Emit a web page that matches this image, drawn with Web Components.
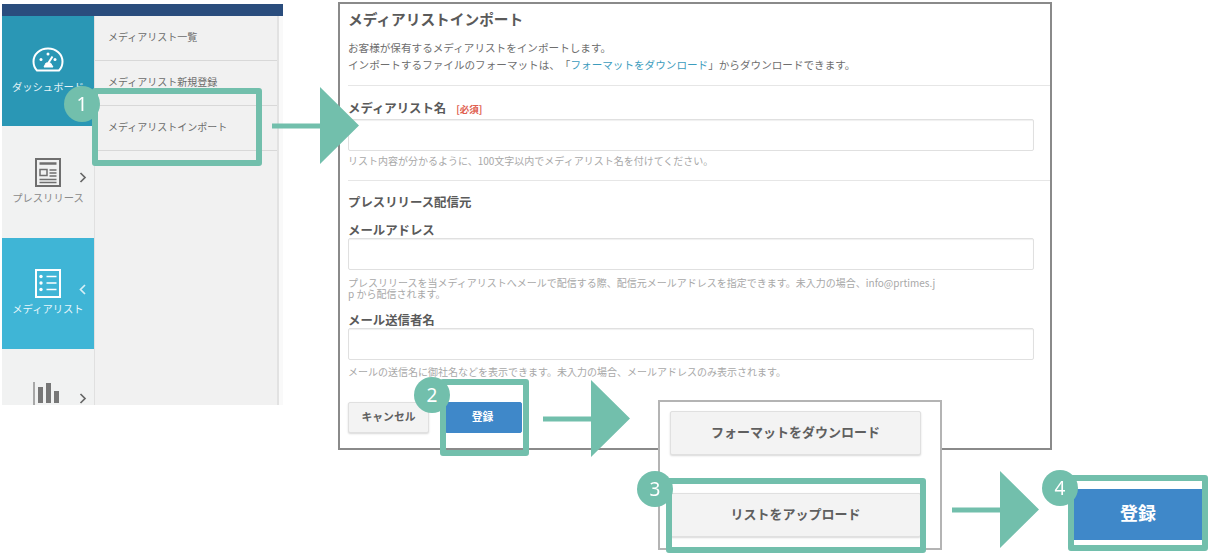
<!DOCTYPE html>
<html lang="ja"><head><meta charset="utf-8"><title>メディアリストインポート</title>
<style>
html,body{margin:0;padding:0;background:#fff}
body{font-family:"Noto Sans CJK JP","Noto Sans",sans-serif;color:#666;text-spacing-trim:space-all}
</style></head><body>
<guide-canvas>
  <side-nav style="left:2px;top:4px">
    <nav-item slot="nav" tone="dark" label="ダッシュボード" icon="gauge"></nav-item>
    <nav-item slot="nav" label="プレスリリース" icon="news" chevron="right"></nav-item>
    <nav-item slot="nav" tone="light" label="メディアリスト" icon="list" chevron="left"></nav-item>
    <nav-item slot="nav" label="" icon="chart" chevron="right"></nav-item>
    <sub-item>メディアリスト一覧</sub-item>
    <sub-item>メディアリスト新規登録</sub-item>
    <sub-item>メディアリストインポート</sub-item>
  </side-nav>
  <import-form style="left:338px;top:2px"></import-form>
  <download-panel style="left:658px;top:400px"></download-panel>
  <big-submit style="left:1074px;top:481px"></big-submit>

  <step-frame style="left:92px;top:88px;width:170px;height:78px"></step-frame>
  <step-frame style="left:440px;top:379px;width:89px;height:77px"></step-frame>
  <step-frame style="left:666px;top:478px;width:260px;height:75px"></step-frame>
  <step-frame style="left:1068px;top:475px;width:140px;height:76px"></step-frame>

  <step-badge style="left:64px;top:86px">1</step-badge>
  <step-badge style="left:414px;top:377px">2</step-badge>
  <step-badge style="left:637px;top:471px">3</step-badge>
  <step-badge style="left:1042px;top:470px">4</step-badge>

  <flow-arrow style="left:272px;top:87px"></flow-arrow>
  <flow-arrow style="left:543px;top:380px"></flow-arrow>
  <flow-arrow style="left:952px;top:471px"></flow-arrow>
</guide-canvas>

<script>
const mk=(name,html)=>{customElements.define(name,class extends HTMLElement{
  constructor(){super();this.attachShadow({mode:'open'}).innerHTML=html;}
});};

mk('guide-canvas',`<style>:host{display:block;position:relative;width:1212px;height:559px;overflow:hidden;filter:blur(.45px)}</style><slot></slot>`);

const icons={
 gauge:`<svg width="32" height="25" viewBox="0 0 32 25" fill="none" stroke="#fff" stroke-width="2"><path d="M5 23.500C3 21.500 1.500 18 1.500 14.500C1.500 7 8 1.500 16 1.500S30.500 7 30.500 14.500C30.500 18 29 21.500 27 23.500Z" stroke-linejoin="round"/><circle cx="9" cy="12.500" r="1.500" fill="#fff" stroke="none"/><circle cx="16" cy="7" r="1.500" fill="#fff" stroke="none"/><circle cx="23" cy="12.500" r="1.500" fill="#fff" stroke="none"/><path d="M20.500 9.500L16 16.500" stroke-width="2"/><path d="M12 20L14 16H18.500L21 20Z" fill="#fff" stroke="#fff" stroke-width="1"/></svg>`,
 news:`<svg width="26" height="29" viewBox="0 0 26 29" fill="none" stroke="#6f6f6f"><rect x="1" y="1" width="24" height="27" stroke-width="2"/><path d="M4.500 5.500H21.500" stroke-width="2.500"/><path d="M5 11.500H12V17.500H5Z" stroke-width="1.500"/><path d="M14.500 12H21.500M14.500 15H21.500M14.500 18H21.500M4.500 21.500H21.500M4.500 24.500H21.500" stroke-width="1.400"/></svg>`,
 list:`<svg width="26" height="29" viewBox="0 0 26 29" fill="none" stroke="#fff"><rect x="1" y="1" width="24" height="27" stroke-width="2"/><path d="M11.500 7.500H21.500M11.500 14H21.500M11.500 20.500H21.500" stroke-width="1.500"/><circle cx="6" cy="7.500" r="1.700" fill="#fff" stroke="none"/><circle cx="6" cy="14" r="1.700" fill="#fff" stroke="none"/><circle cx="6" cy="20.500" r="1.700" fill="#fff" stroke="none"/></svg>`,
 chart:`<svg width="31" height="26" viewBox="0 0 31 26" fill="none"><path d="M1 1V24.500H30" stroke="#777" stroke-width="1.200"/><rect x="5" y="6" width="5" height="16" fill="#777"/><rect x="13" y="2" width="5" height="20" fill="#777"/><rect x="21" y="10" width="5" height="12" fill="#777"/></svg>`
};

customElements.define('nav-item',class extends HTMLElement{
  constructor(){super();this.attachShadow({mode:'open'});}
  connectedCallback(){
    const icon=icons[this.getAttribute('icon')]||'',label=this.getAttribute('label')||'',ch=this.getAttribute('chevron');
    const d=ch==='left'?'M6 1L1.500 5.500L6 10':'M1.500 1L6 5.500L1.500 10';
    this.shadowRoot.innerHTML=`<style>
      :host{display:flex;flex-direction:column;align-items:center;position:relative;box-sizing:border-box;height:112px;padding-top:32px;background:#f1f2f2;color:#8a8a8a;font-size:10.3px;line-height:14px}
      :host([tone=dark]){background:#2a97b5;color:#e4f3f7;height:110px;padding-top:31px}
      :host([tone=light]){background:#3fb5d6;color:#e9f7fb;height:111px;padding-top:31px}
      :host([icon=chart]){height:56px;padding-top:32px;overflow:hidden}
      .ic{display:flex;flex:none}
      span{margin-top:4px;white-space:nowrap}
      :host([tone=dark]) span{margin-top:8px}
      .ch{position:absolute;right:7px;top:46px}
      :host([icon=chart]) .ch{top:44px}
    </style><div class="ic">${icon}</div>${label?`<span>${label}</span>`:''}${ch?`<svg class="ch" width="8" height="11" viewBox="0 0 8 11" fill="none" stroke="${ch==='left'?'#d7eff6':'#666'}" stroke-width="1.700"><path d="${d}"/></svg>`:''}`;
  }
});

mk('sub-item',`<style>:host{display:flex;align-items:center;box-sizing:border-box;height:45px;padding:0 0 4px 13px;font-size:10px;color:#6c6c6c;border-bottom:1px solid #d8d8d8;white-space:nowrap}</style><slot></slot>`);

mk('side-nav',`<style>
 :host{display:block;position:absolute;width:281px;height:401px;overflow:hidden}
 .top{height:12px;background:#2a4d7d}
 .body{display:flex;height:389px}
 .l{width:92px;flex:none;border-right:1px solid #e0e0e0;display:flex;flex-direction:column;background:#f1f2f2}
 .s{width:182px;flex:none;background:#f1f1f1;border-right:2px solid #e2e2e2}
 .edge{flex:1;background:#f9f9f9}
</style><div class="top"></div><div class="body"><div class="l"><slot name="nav"></slot></div><div class="s"><slot></slot></div><div class="edge"></div></div>`);

mk('form-field',`<style>
 :host{display:block;padding-right:16px}
 .lab{font-size:12.4px;font-weight:700;line-height:16px;color:#5a5a5a;display:block;white-space:nowrap}
 .box{display:block;box-sizing:border-box;height:32px;margin-top:var(--box-gap,0px);border:1px solid #e0e0e0;border-radius:2px;background:#fff;box-shadow:inset 0 1px 1px #f0f0f0}
 .help{font-size:10px;line-height:11px;color:#a8a8a8;margin-top:var(--help-gap,4px);white-space:nowrap}
</style><span class="lab"><slot name="label"></slot></span><div class="box"></div><div class="help"><slot></slot></div>`);

mk('ui-button',`<style>
 :host{display:flex;align-items:center;justify-content:center;box-sizing:border-box;border:1px solid #e0e0e0;border-radius:2px;background:#f3f3f3;color:#5f5f5f;font-weight:700;font-size:10.8px;box-shadow:0 1px 2px #d8d8d8;white-space:nowrap;padding-bottom:3px}
 :host([primary]){background:#3f88c9;border-color:#3f88c9;color:#fff;box-shadow:none;padding-right:2px}
</style><slot></slot>`);

mk('import-form',`<style>
 :host{display:block;position:absolute;box-sizing:border-box;width:714px;height:448px;border:2px solid #8a8a8a;background:#fff;padding-left:8px;color:#6e6e6e}
 h1{margin:0;padding-top:5px;font-size:14.7px;line-height:20px;font-weight:700;color:#5a5a5a}
 p{margin:10px 0 0;font-size:10.6px;line-height:17px;color:#6e6e6e}
 a{color:#3c9cbd}
 hr{border:0;border-top:1px solid #e6e6e6;margin:0}
 .req{color:#e0604f;font-size:9.5px;margin-left:10px}
 h2{margin:13px 0 0;font-size:12.4px;line-height:16px;color:#5a5a5a}
 .actions{display:flex;gap:16px;margin-top:25px}
</style>
<h1>メディアリストインポート</h1>
<p>お客様が保有するメディアリストをインポートします。<br>インポートするファイルのフォーマットは、「<a>フォーマットをダウンロード</a>」からダウンロードできます。</p>
<hr style="margin-top:12px">
<form-field style="margin-top:14px;--box-gap:2px"><span slot="label">メディアリスト名<span class="req">[必須]</span></span>リスト内容が分かるように、100文字以内でメディアリスト名を付けてください。</form-field>
<hr style="margin-top:14px">
<h2>プレスリリース配信元</h2>
<form-field style="margin-top:12px;--help-gap:7px"><span slot="label">メールアドレス</span>プレスリリースを当メディアリストへメールで配信する際、配信元メールアドレスを指定できます。未入力の場合、info@prtimes.j<br>p から配信されます。</form-field>
<form-field style="margin-top:13px;--help-gap:6px"><span slot="label">メール送信者名</span>メールの送信名に御社名などを表示できます。未入力の場合、メールアドレスのみ表示されます。</form-field>
<div class="actions"><ui-button style="width:81px;height:31px">キャンセル</ui-button><ui-button primary style="width:77px;height:31px">登録</ui-button></div>`);

mk('download-panel',`<style>
 :host{display:flex;flex-direction:column;gap:38px;position:absolute;box-sizing:border-box;width:284px;height:150px;border:2px solid #b4b4b4;background:#fff;padding:9px 0 0 10px}
 ui-button{width:251px;height:44px;font-size:13px}
</style><ui-button>フォーマットをダウンロード</ui-button><ui-button>リストをアップロード</ui-button>`);

mk('big-submit',`<style>
 :host{display:flex;flex-direction:column;position:absolute;width:128px;height:64px;background:#fff;padding-top:8px;box-sizing:border-box}
 div{height:51px;background:#3f88c9;color:#fff;font-size:18px;font-weight:700;display:flex;align-items:center;justify-content:center;padding-bottom:5px;box-sizing:border-box}
</style><div>登録</div>`);

mk('step-frame',`<style>:host{display:block;position:absolute;box-sizing:border-box;border:6px solid #72bfac;border-radius:3px}</style>`);
mk('step-badge',`<style>:host{display:flex;align-items:center;justify-content:center;position:absolute;width:36px;height:36px;border-radius:50%;background:#72bfac;color:#fff;font-family:"Noto Sans",sans-serif;font-size:19px}</style><slot></slot>`);
mk('flow-arrow',`<style>:host{display:block;position:absolute;width:87px;height:78px}svg{display:block}</style><svg width="87" height="78" viewBox="0 0 87 78"><path d="M0 36.500H48V0L87 38.500L48 77V41.500H0Z" fill="#72bfac"/></svg>`);
</script>
</body></html>
